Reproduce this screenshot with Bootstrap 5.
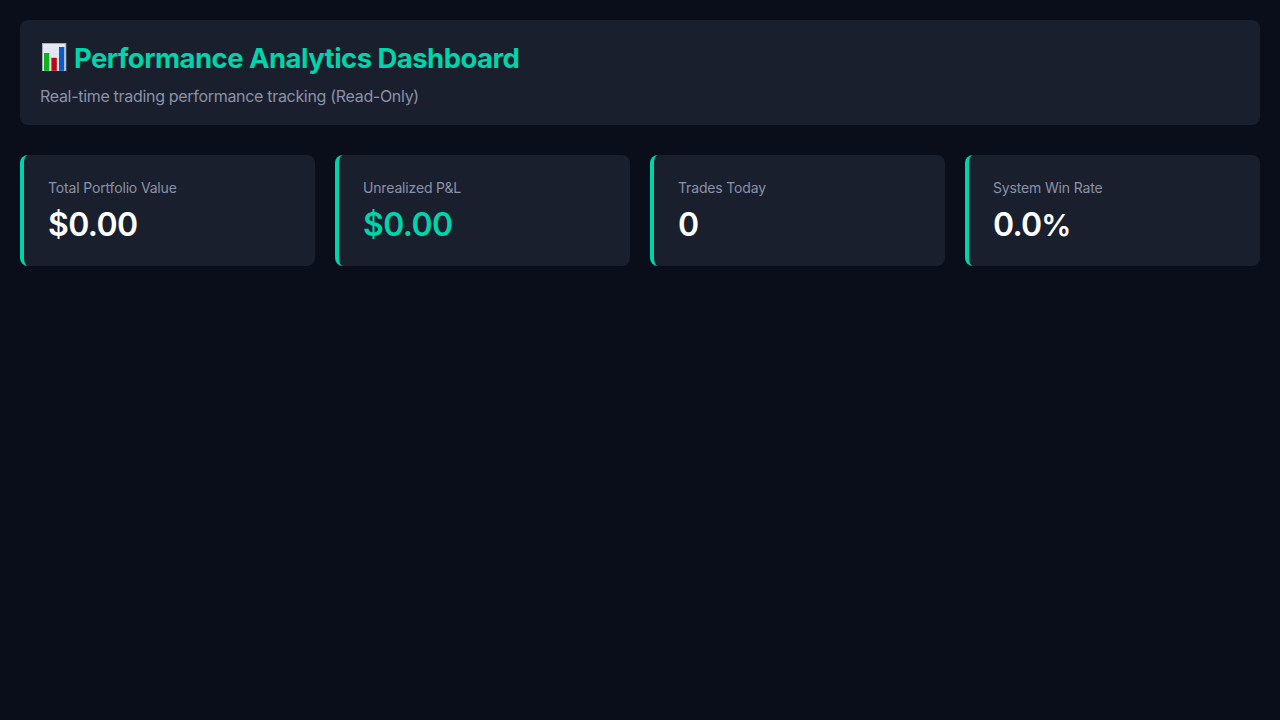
<!DOCTYPE html>
<html lang="en">
<head>
<meta charset="utf-8">
<meta name="viewport" content="width=device-width, initial-scale=1">
<title>Performance Analytics Dashboard</title>
<link href="https://cdn.jsdelivr.net/npm/bootstrap@5.3.0/dist/css/bootstrap.min.css" rel="stylesheet">
<style>
  body { background: #0a0e1a; color: #fff; font-family: Inter, "Liberation Sans", sans-serif; padding: 20px; }
  .panel { background: #1a1f2e; border-radius: 8px; }
  .page-head { height: 105px; padding: 20px; margin-bottom: 30px; }
  .page-title { color: #00d4aa; font-size: 27.5px; font-weight: 700; line-height: 34px; letter-spacing: -.55px; margin: 1px 0 10px; height: 34px; }
  .chart-icon { width: 28px; height: 30px; margin: 0 6px 2px 0; }
  .page-sub { color: #8b92a8; font-size: 16px; line-height: 19px; letter-spacing: -.31px; margin: 12px 0 0; }
  .stats { --bs-gutter-x: 20px; }
  .stat { height: 111px; padding: 24px; border-left: 4px solid #00d4aa; }
  .stat-label { color: #8b92a8; font-size: 14px; line-height: 17px; margin-bottom: 8px; letter-spacing: -.16px; }
  .stat-value { font-size: 32px; font-weight: 600; line-height: 41px; letter-spacing: -.6px; }
  .stat-percent { letter-spacing: -.8px; }
  .unit { font-size: 30px; line-height: 1; }
  .gain { color: #00d4aa; }
</style>
</head>
<body>
<header class="panel page-head">
  <h1 class="page-title d-flex align-items-center"><svg class="chart-icon flex-shrink-0" viewBox="0 0 28 30" aria-hidden="true">
    <rect x="2" y="1" width="24.3" height="28" fill="#a9acb8"/>
    <rect x="3" y="2" width="22.3" height="26.8" fill="#e3e8f3"/>
    <path d="M3 7h22M3 12h22M3 17h22M3 22h22" stroke="#d5ddec" stroke-width=".6"/>
    <rect x="4" y="11" width="5.3" height="17.8" fill="#0cb41c"/>
    <rect x="11.4" y="15.8" width="5.4" height="13" fill="#bd0713"/>
    <rect x="19" y="5" width="5.3" height="23.8" fill="#0b5bc3"/>
  </svg><span>Performance Analytics Dashboard</span></h1>
  <p class="page-sub"><span>Real-time trading performance tracking (Read-Only)</span></p>
</header>
<main class="row row-cols-4 stats">
  <div class="col"><div class="panel stat"><div class="stat-label">Total Portfolio Value</div><div class="stat-value">$0.00</div></div></div>
  <div class="col"><div class="panel stat"><div class="stat-label">Unrealized P&amp;L</div><div class="stat-value gain">$0.00</div></div></div>
  <div class="col"><div class="panel stat"><div class="stat-label">Trades Today</div><div class="stat-value">0</div></div></div>
  <div class="col"><div class="panel stat"><div class="stat-label">System Win Rate</div><div class="stat-value stat-percent">0.0<span class="unit">%</span></div></div></div>
</main>
<script src="https://cdn.jsdelivr.net/npm/bootstrap@5.3.0/dist/js/bootstrap.bundle.min.js"></script>
</body>
</html>
